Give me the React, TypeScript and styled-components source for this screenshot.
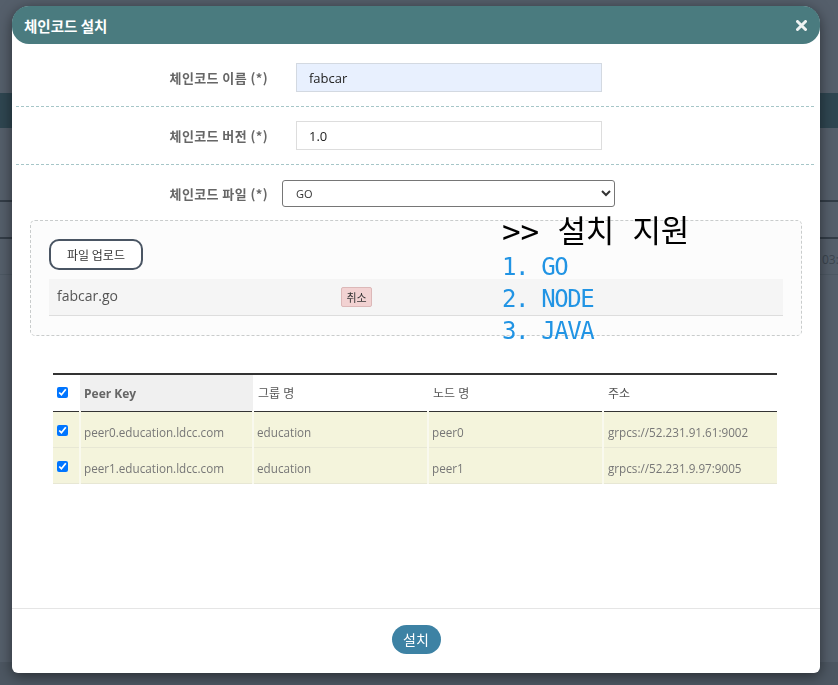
import React from 'react';
import styled, { createGlobalStyle } from 'styled-components';

const GlobalStyle = createGlobalStyle`
  html, body { margin: 0; padding: 0; }
  body {
    font-family: "Open Sans", "Noto Sans CJK KR", sans-serif;
    background: #545f6b;
  }
  * { box-sizing: border-box; }
`;

/* ---------- page behind the overlay ---------- */
const Page = styled.div`
  min-height: 685px;
  display: flex;
  flex-direction: column;
  background: #555f6b;
`;

const PageBand = styled.div<{ $h: number; $bg?: string; $line?: string }>`
  height: ${(p) => p.$h}px;
  background: ${(p) => p.$bg || 'transparent'};
  border-bottom: ${(p) => (p.$line ? `2px solid ${p.$line}` : 'none')};
  flex-shrink: 0;
`;

const PageCellRow = styled.div`
  height: 36px;
  display: flex;
  align-items: center;
  justify-content: flex-end;
  padding-top: 6px;
  border-bottom: 1px solid #4d5863;
  color: #3c4650;
  font-size: 12px;
`;

const PageCellText = styled.span`
  width: 16px;
  white-space: nowrap;
`;

const PageFill = styled.div`
  flex: 1;
`;

const PageBottom = styled.div`
  height: 23px;
  background: #4d5762;
`;

/* ---------- modal ---------- */
const Modal = styled.div`
  position: fixed;
  top: 6px;
  left: 12px;
  width: 808px;
  height: 667px;
  background: #fff;
  border-radius: 18px 18px 6px 6px;
  box-shadow: 0 3px 14px rgba(0, 0, 0, 0.5);
  display: flex;
  flex-direction: column;
`;

const Header = styled.div`
  height: 38px;
  background: #4a7b7f;
  border-radius: 17px;
  display: flex;
  align-items: center;
  justify-content: space-between;
  padding: 0 13px 0 12px;
  flex-shrink: 0;
`;

const Title = styled.h4`
  margin: 0;
  color: #fff;
  font-size: 14.5px;
  font-weight: 700;
  font-family: "Noto Sans CJK KR", sans-serif;
`;

const CloseButton = styled.button`
  border: none;
  background: transparent;
  padding: 0;
  width: 12px;
  height: 12px;
  display: flex;
  align-items: center;
  justify-content: center;
  cursor: pointer;
`;

const Body = styled.div`
  flex: 1;
  position: relative;
  display: flex;
  flex-direction: column;
`;

const FormRow = styled.div<{ $last?: boolean }>`
  display: grid;
  grid-template-columns: 252px 1fr;
  column-gap: 14px;
  align-items: center;
  margin: 0 6px 0 4px;
  padding: ${(p) => (p.$last ? '15px 0 0' : '19px 0 14px')};
  border-bottom: ${(p) => (p.$last ? 'none' : '1px dashed #a6c6c8')};
  &:nth-child(2) { padding-top: 14px; }
`;

const Label = styled.label`
  text-align: right;
  font-size: 13px;
  font-weight: 600;
  letter-spacing: 0.4px;
  color: #666;
  font-family: "Noto Sans CJK KR", sans-serif;
`;

const TextInput = styled.input<{ $filled?: boolean }>`
  margin-left: 14px;
  width: 306px;
  height: 29px;
  border: 1px solid ${(p) => (p.$filled ? '#d3d9e1' : '#dddddd')};
  background: ${(p) => (p.$filled ? '#e8f0fe' : '#ffffff')};
  padding: 0 12px;
  font-size: 13px;
  font-family: "Open Sans", sans-serif;
  color: #222;
  outline: none;
`;

const Select = styled.select`
  width: 333px;
  height: 27px;
  border: 1px solid #767676;
  border-radius: 3px;
  background: #fff;
  padding: 0 9px;
  font-size: 11px;
  font-family: "Open Sans", sans-serif;
  color: #333;
`;

const UploadBox = styled.div`
  margin: 13px 18px 0 18px;
  border: 1px dashed #c9cccc;
  border-radius: 5px;
  background: #fcfcfc;
  padding: 18px 18px 19px 18px;
  display: flex;
  flex-direction: column;
  gap: 9px;
`;

const UploadButton = styled.button`
  align-self: flex-start;
  width: 94px;
  height: 31px;
  border: 2px solid #4a5563;
  border-radius: 10px;
  background: #fff;
  font-size: 12px;
  font-family: "Noto Sans CJK KR", sans-serif;
  color: #333;
  padding: 0;
`;

const FileRow = styled.div`
  display: grid;
  grid-template-columns: 284px auto;
  align-items: center;
  justify-items: start;
  height: 37px;
  padding: 0 8px;
  background: #f5f5f5;
  border-bottom: 1px solid #dddddd;
`;

const FileName = styled.span`
  font-size: 14px;
  color: #555;
  font-family: "Open Sans", sans-serif;
  margin-top: -3px;
`;

const CancelButton = styled.button`
  width: 31px;
  height: 20px;
  padding: 0;
  background: #f2d2d2;
  border: 1px solid #dcb8b8;
  border-radius: 2px;
  font-size: 11px;
  color: #333;
  font-family: "Noto Sans CJK KR", sans-serif;
`;

const Guide = styled.div`
  position: absolute;
  left: 490px;
  top: 167px;
  display: flex;
  flex-direction: column;
  font-family: "DejaVu Sans Mono", "Noto Sans CJK KR", monospace;
  pointer-events: none;
`;

const GuideTitle = styled.div`
  font-size: 31px;
  line-height: 40px;
  letter-spacing: -0.2px;
  color: #000;
  font-family: "DejaVu Sans Mono", "Noto Sans CJK KR", monospace;
`;

const GuideItem = styled.div`
  font-size: 24px;
  line-height: 32px;
  letter-spacing: -1.4px;
  color: #2194e4;
`;

const Table = styled.table`
  width: 724px;
  margin: 37px 43px 0 41px;
  border-collapse: collapse;
  table-layout: fixed;
  border-top: 2px solid #333;
  font-size: 12px;
  font-family: "Open Sans", "Noto Sans CJK KR", sans-serif;
`;

const HeadRow = styled.tr`
  height: 37px;
  border-bottom: 1px solid #333;
`;

const Th = styled.th<{ $sorted?: boolean; $w?: number }>`
  width: ${(p) => (p.$w ? `${p.$w}px` : 'auto')};
  text-align: left;
  padding: 1px 5px 0;
  font-weight: ${(p) => (p.$sorted ? 700 : 400)};
  color: ${(p) => (p.$sorted ? '#666' : '#555')};
  background: ${(p) => (p.$sorted ? '#f0f0f0' : '#fff')};
  padding-left: ${(p) => (p.$sorted ? '4px' : '5px')};
`;

const DataRow = styled.tr`
  height: 36px;
  background: #f4f4dc;
  border-bottom: 1px solid #e7e7d4;
`;

const Td = styled.td`
  padding: 6px 5px 0 3px;
  font-size: 11.7px;
  color: #777;
  border-right: 2px solid #f9f9ee;
  &:last-child { border-right: none; padding-left: 4px; }
`;

const CheckCell = styled.td`
  padding: 2px 0 0 4px;
  border-right: 2px solid #f9f9ee;
`;

const CheckHead = styled.th`
  width: 27px;
  padding: 0 0 0 4px;
  text-align: left;
`;

const Check = styled.input`
  width: 11px;
  height: 11px;
  margin: 0;
  display: block;
  accent-color: #0075ff;
`;

const Footer = styled.div`
  height: 65px;
  border-top: 1px solid #e5e5e5;
  display: flex;
  align-items: center;
  justify-content: center;
  flex-shrink: 0;
  padding-bottom: 4px;
`;

const InstallButton = styled.button`
  width: 49px;
  height: 29px;
  border: none;
  border-radius: 15px;
  background: #3d82a4;
  color: #fff;
  font-size: 14px;
  font-family: "Noto Sans CJK KR", sans-serif;
  padding: 0;
`;

const peers = [
  { key: 'peer0.education.ldcc.com', group: 'education', node: 'peer0', addr: 'grpcs://52.231.91.61:9002' },
  { key: 'peer1.education.ldcc.com', group: 'education', node: 'peer1', addr: 'grpcs://52.231.9.97:9005' },
];

export default function App() {
  return (
    <>
      <GlobalStyle />
      <Page>
        <PageBand $h={93} />
        <PageBand $h={35} $bg="#2f4651" />
        <PageBand $h={74} $line="#333d47" />
        <PageBand $h={37} $line="#333d47" />
        <PageCellRow>
          <PageCellText>03:</PageCellText>
        </PageCellRow>
        <PageFill />
        <PageBottom />
      </Page>

      <Modal>
        <Header>
          <Title>체인코드 설치</Title>
          <CloseButton aria-label="close">
            <svg width="11" height="11" viewBox="0 0 11 11">
              <path d="M1.5 1.5 L9.5 9.5 M9.5 1.5 L1.5 9.5" stroke="#eef2f2" strokeWidth="3" strokeLinecap="round" />
            </svg>
          </CloseButton>
        </Header>

        <Body>
          <FormRow>
            <Label>체인코드 이름 (*)</Label>
            <div>
              <TextInput $filled defaultValue="fabcar" />
            </div>
          </FormRow>
          <FormRow>
            <Label>체인코드 버전 (*)</Label>
            <div>
              <TextInput defaultValue="1.0" />
            </div>
          </FormRow>
          <FormRow $last>
            <Label>체인코드 파일 (*)</Label>
            <div>
              <Select defaultValue="GO">
                <option value="GO">GO</option>
                <option value="NODE">NODE</option>
                <option value="JAVA">JAVA</option>
              </Select>
            </div>
          </FormRow>

          <UploadBox>
            <UploadButton>파일 업로드</UploadButton>
            <FileRow>
              <FileName>fabcar.go</FileName>
              <CancelButton>취소</CancelButton>
            </FileRow>
          </UploadBox>

          <Guide>
            <GuideTitle>&gt;&gt; 설치 지원</GuideTitle>
            <GuideItem>1. GO</GuideItem>
            <GuideItem>2. NODE</GuideItem>
            <GuideItem>3. JAVA</GuideItem>
          </Guide>

          <Table>
            <thead>
              <HeadRow>
                <CheckHead>
                  <Check type="checkbox" defaultChecked />
                </CheckHead>
                <Th $sorted $w={173}>Peer Key</Th>
                <Th $w={175}>그룹 명</Th>
                <Th $w={175}>노드 명</Th>
                <Th>주소</Th>
              </HeadRow>
            </thead>
            <tbody>
              {peers.map((p) => (
                <DataRow key={p.key}>
                  <CheckCell>
                    <Check type="checkbox" defaultChecked />
                  </CheckCell>
                  <Td>{p.key}</Td>
                  <Td>{p.group}</Td>
                  <Td>{p.node}</Td>
                  <Td>{p.addr}</Td>
                </DataRow>
              ))}
            </tbody>
          </Table>
        </Body>

        <Footer>
          <InstallButton>설치</InstallButton>
        </Footer>
      </Modal>
    </>
  );
}
